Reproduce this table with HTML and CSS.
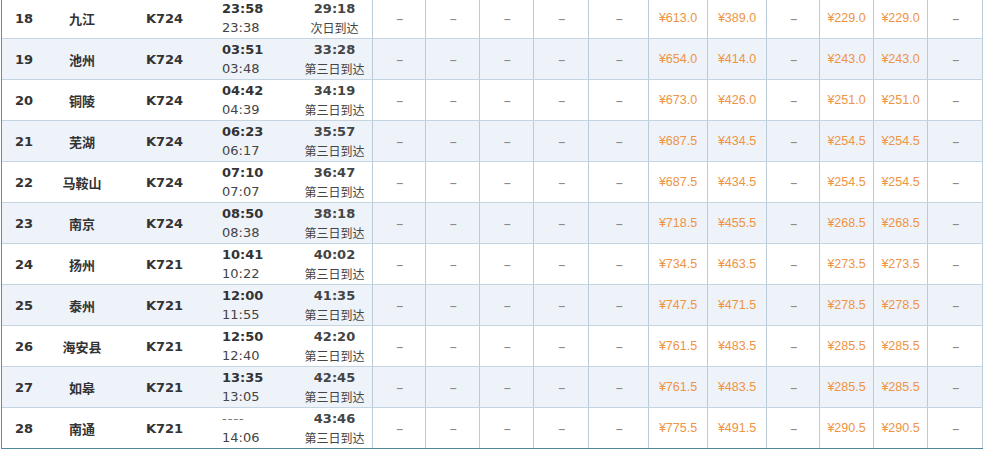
FILE: index.html
```html
<!DOCTYPE html>
<html>
<head>
<meta charset="utf-8">
<link rel="stylesheet" href="styles.css">
</head>
<body>
<div class="table">
  <div class="row">
    <div class="c no">18</div><div class="c st">九江</div><div class="c tr">K724</div>
    <div class="c tm"><b>23:58</b><span>23:38</span></div>
    <div class="c du"><b>29:18</b><span>次日到达</span></div>
    <div class="c d">--</div><div class="c d">--</div><div class="c d">--</div><div class="c d">--</div><div class="c d">--</div>
    <div class="c p">¥613.0</div><div class="c p">¥389.0</div><div class="c d">--</div><div class="c p">¥229.0</div><div class="c p">¥229.0</div><div class="c d last">--</div>
  </div>
  <div class="row alt">
    <div class="c no">19</div><div class="c st">池州</div><div class="c tr">K724</div>
    <div class="c tm"><b>03:51</b><span>03:48</span></div>
    <div class="c du"><b>33:28</b><span>第三日到达</span></div>
    <div class="c d">--</div><div class="c d">--</div><div class="c d">--</div><div class="c d">--</div><div class="c d">--</div>
    <div class="c p">¥654.0</div><div class="c p">¥414.0</div><div class="c d">--</div><div class="c p">¥243.0</div><div class="c p">¥243.0</div><div class="c d last">--</div>
  </div>
  <div class="row">
    <div class="c no">20</div><div class="c st">铜陵</div><div class="c tr">K724</div>
    <div class="c tm"><b>04:42</b><span>04:39</span></div>
    <div class="c du"><b>34:19</b><span>第三日到达</span></div>
    <div class="c d">--</div><div class="c d">--</div><div class="c d">--</div><div class="c d">--</div><div class="c d">--</div>
    <div class="c p">¥673.0</div><div class="c p">¥426.0</div><div class="c d">--</div><div class="c p">¥251.0</div><div class="c p">¥251.0</div><div class="c d last">--</div>
  </div>
  <div class="row alt">
    <div class="c no">21</div><div class="c st">芜湖</div><div class="c tr">K724</div>
    <div class="c tm"><b>06:23</b><span>06:17</span></div>
    <div class="c du"><b>35:57</b><span>第三日到达</span></div>
    <div class="c d">--</div><div class="c d">--</div><div class="c d">--</div><div class="c d">--</div><div class="c d">--</div>
    <div class="c p">¥687.5</div><div class="c p">¥434.5</div><div class="c d">--</div><div class="c p">¥254.5</div><div class="c p">¥254.5</div><div class="c d last">--</div>
  </div>
  <div class="row">
    <div class="c no">22</div><div class="c st">马鞍山</div><div class="c tr">K724</div>
    <div class="c tm"><b>07:10</b><span>07:07</span></div>
    <div class="c du"><b>36:47</b><span>第三日到达</span></div>
    <div class="c d">--</div><div class="c d">--</div><div class="c d">--</div><div class="c d">--</div><div class="c d">--</div>
    <div class="c p">¥687.5</div><div class="c p">¥434.5</div><div class="c d">--</div><div class="c p">¥254.5</div><div class="c p">¥254.5</div><div class="c d last">--</div>
  </div>
  <div class="row alt">
    <div class="c no">23</div><div class="c st">南京</div><div class="c tr">K724</div>
    <div class="c tm"><b>08:50</b><span>08:38</span></div>
    <div class="c du"><b>38:18</b><span>第三日到达</span></div>
    <div class="c d">--</div><div class="c d">--</div><div class="c d">--</div><div class="c d">--</div><div class="c d">--</div>
    <div class="c p">¥718.5</div><div class="c p">¥455.5</div><div class="c d">--</div><div class="c p">¥268.5</div><div class="c p">¥268.5</div><div class="c d last">--</div>
  </div>
  <div class="row">
    <div class="c no">24</div><div class="c st">扬州</div><div class="c tr">K721</div>
    <div class="c tm"><b>10:41</b><span>10:22</span></div>
    <div class="c du"><b>40:02</b><span>第三日到达</span></div>
    <div class="c d">--</div><div class="c d">--</div><div class="c d">--</div><div class="c d">--</div><div class="c d">--</div>
    <div class="c p">¥734.5</div><div class="c p">¥463.5</div><div class="c d">--</div><div class="c p">¥273.5</div><div class="c p">¥273.5</div><div class="c d last">--</div>
  </div>
  <div class="row alt">
    <div class="c no">25</div><div class="c st">泰州</div><div class="c tr">K721</div>
    <div class="c tm"><b>12:00</b><span>11:55</span></div>
    <div class="c du"><b>41:35</b><span>第三日到达</span></div>
    <div class="c d">--</div><div class="c d">--</div><div class="c d">--</div><div class="c d">--</div><div class="c d">--</div>
    <div class="c p">¥747.5</div><div class="c p">¥471.5</div><div class="c d">--</div><div class="c p">¥278.5</div><div class="c p">¥278.5</div><div class="c d last">--</div>
  </div>
  <div class="row">
    <div class="c no">26</div><div class="c st">海安县</div><div class="c tr">K721</div>
    <div class="c tm"><b>12:50</b><span>12:40</span></div>
    <div class="c du"><b>42:20</b><span>第三日到达</span></div>
    <div class="c d">--</div><div class="c d">--</div><div class="c d">--</div><div class="c d">--</div><div class="c d">--</div>
    <div class="c p">¥761.5</div><div class="c p">¥483.5</div><div class="c d">--</div><div class="c p">¥285.5</div><div class="c p">¥285.5</div><div class="c d last">--</div>
  </div>
  <div class="row alt">
    <div class="c no">27</div><div class="c st">如皋</div><div class="c tr">K721</div>
    <div class="c tm"><b>13:35</b><span>13:05</span></div>
    <div class="c du"><b>42:45</b><span>第三日到达</span></div>
    <div class="c d">--</div><div class="c d">--</div><div class="c d">--</div><div class="c d">--</div><div class="c d">--</div>
    <div class="c p">¥761.5</div><div class="c p">¥483.5</div><div class="c d">--</div><div class="c p">¥285.5</div><div class="c p">¥285.5</div><div class="c d last">--</div>
  </div>
  <div class="row lastrow">
    <div class="c no">28</div><div class="c st">南通</div><div class="c tr">K721</div>
    <div class="c tm"><i>----</i><span>14:06</span></div>
    <div class="c du"><b>43:46</b><span>第三日到达</span></div>
    <div class="c d">--</div><div class="c d">--</div><div class="c d">--</div><div class="c d">--</div><div class="c d">--</div>
    <div class="c p">¥775.5</div><div class="c p">¥491.5</div><div class="c d">--</div><div class="c p">¥290.5</div><div class="c p">¥290.5</div><div class="c d last">--</div>
  </div>
</div>
</body>
</html>
```

FILE: styles.css
```css
html, body {
  margin: 0;
  padding: 0;
  background: #ffffff;
}
body {
  font-family: "DejaVu Sans", "Noto Sans CJK SC", sans-serif;
  font-size: 13px;
  color: #333333;
  overflow: hidden;
}
.table {
  margin: -2px 0 0 1px;
  width: 982px;
  border-left: 1px solid #5a8fa8;
  box-sizing: border-box;
}
.row {
  display: grid;
  grid-template-columns: 44px 70px 97px 84px 75px 53px 54px 54px 55px 60px 59px 59px 53px 54px 54px 56px;
  height: 41px;
  border-bottom: 1px solid #c5d4e1;
  box-sizing: border-box;
  background: #ffffff;
}
.row.alt {
  background: #eef2f9;
}
.row.lastrow {
  border-bottom-color: #4f889f;
}
.c {
  display: flex;
  flex-direction: column;
  justify-content: center;
  align-items: center;
  box-sizing: border-box;
  min-width: 0;
  white-space: nowrap;
}
.no, .tr {
  font-weight: bold;
}
.st {
  font-weight: bold;
  font-family: "Noto Sans CJK SC", sans-serif;
  font-size: 13px;
  padding-left: 2px;
}
.tm {
  align-items: flex-start;
  padding-left: 9px;
  line-height: 19px;
}
.tm b {
  font-weight: bold;
}
.tm span {
  color: #444444;
}
.tm i {
  font-style: normal;
  color: #777777;
  font-size: 13px;
  letter-spacing: 1px;
}
.du {
  line-height: 19px;
}
.du b {
  font-weight: bold;
  color: #444444;
}
.du span {
  font-family: "Noto Sans CJK SC", sans-serif;
  font-size: 12px;
  color: #444444;
  line-height: 19px;
}
.d, .p {
  border-left: 1px solid #bccbd8;
}
.d {
  font-family: "Liberation Sans", sans-serif;
  font-size: 13px;
  color: #888888;
  letter-spacing: -1.5px;
}
.p {
  font-family: "Liberation Sans", sans-serif;
  font-size: 12.5px;
  color: #ee9444;
}
.last {
  border-right: 1px solid #bccbd8;
}
```
